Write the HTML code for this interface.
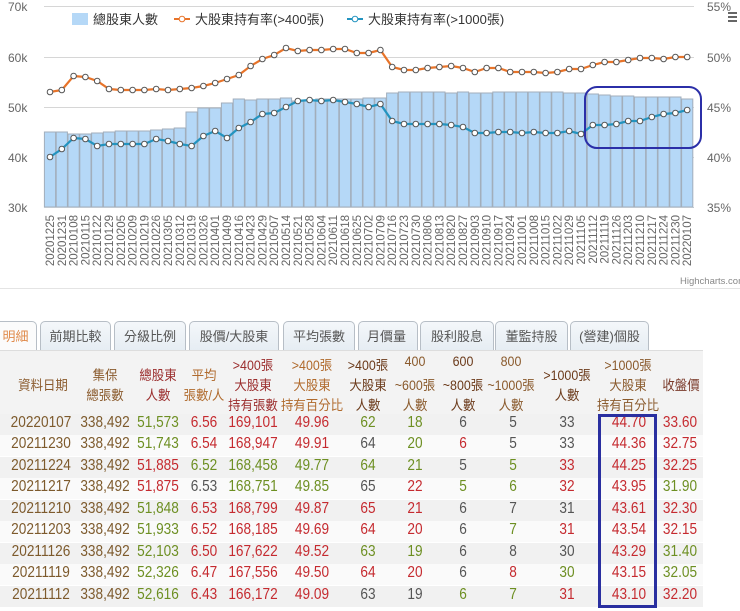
<!DOCTYPE html>
<html><head><meta charset="utf-8">
<style>
body{margin:0;width:740px;height:611px;overflow:hidden;background:#fff;font-family:"Liberation Sans","Noto Sans CJK TC",sans-serif;position:relative}
.tab{position:absolute;top:321px;height:29px;border:1px solid #b7bec6;border-bottom:none;border-radius:5px 5px 0 0;background:linear-gradient(#f4f7fa,#e6edf3);color:#555;font-size:13px;line-height:29px;text-align:center;box-sizing:border-box}
.c{position:absolute;width:90px;margin-left:-45px;text-align:center;white-space:nowrap}
.h{font-size:13.5px;color:#8a5a2c}
.h .c{transform:scaleX(0.92)}
.d{font-size:15.5px}
.d .c{transform:scaleX(0.88)}
.br{color:#7d5a2c}.r{color:#c52a2f}.g{color:#6d8f22}.k{color:#555}
.row{position:absolute;left:0;width:703px;height:21px}
</style></head><body>
<svg width="740" height="300" style="position:absolute;left:0;top:0" font-family="Liberation Sans, Noto Sans CJK TC, sans-serif">
<g stroke="#d6d6d6" stroke-width="1">
<line x1="44" y1="6.5" x2="694" y2="6.5"/><line x1="44" y1="57.5" x2="694" y2="57.5"/><line x1="44" y1="107.5" x2="694" y2="107.5"/><line x1="44" y1="157.5" x2="694" y2="157.5"/>
</g>
<g font-size="12" fill="#666">
<text x="8" y="11">70k</text><text x="8" y="62">60k</text><text x="8" y="112">50k</text><text x="8" y="162">40k</text><text x="8" y="212">30k</text>
<text x="707" y="11">55%</text><text x="707" y="62">50%</text><text x="707" y="112">45%</text><text x="707" y="162">40%</text><text x="707" y="212">35%</text>
</g>
<g id="bars"></g>
<line x1="44" y1="207.5" x2="694" y2="207.5" stroke="#c0c8d0"/>
<g id="lines"></g>
<rect x="585" y="87" width="116" height="61" rx="12" fill="none" stroke="#2b2fa8" stroke-width="2"/>
<rect x="72" y="13" width="16" height="12" fill="#b5d8f7"/>
<text x="93" y="24" font-size="13" fill="#333">總股東人數</text>
<line x1="174" y1="19" x2="190" y2="19" stroke="#e8742a" stroke-width="2"/><circle cx="182" cy="19" r="2.8" fill="#fff" stroke="#e8742a"/>
<text x="195" y="24" font-size="13" fill="#333">大股東持有率(&gt;400張)</text>
<line x1="347" y1="19" x2="363" y2="19" stroke="#2394c0" stroke-width="2"/><circle cx="355" cy="19" r="2.8" fill="#fff" stroke="#2394c0"/>
<text x="368" y="24" font-size="13" fill="#333">大股東持有率(&gt;1000張)</text>
<g fill="#666"><rect x="728" y="12" width="9" height="2"/><rect x="728" y="16" width="9" height="2"/><rect x="728" y="20" width="9" height="2"/></g>
<g font-size="11.5" fill="#666" text-anchor="end" id="xl">
<text transform="translate(50,215) rotate(-90)" dy="4">20201225</text>
<text transform="translate(61.8,215) rotate(-90)" dy="4">20201231</text>
<text transform="translate(73.6,215) rotate(-90)" dy="4">20210108</text>
<text transform="translate(85.4,215) rotate(-90)" dy="4">20210115</text>
<text transform="translate(97.2,215) rotate(-90)" dy="4">20210122</text>
<text transform="translate(109,215) rotate(-90)" dy="4">20210129</text>
<text transform="translate(120.8,215) rotate(-90)" dy="4">20210205</text>
<text transform="translate(132.6,215) rotate(-90)" dy="4">20210209</text>
<text transform="translate(144.4,215) rotate(-90)" dy="4">20210219</text>
<text transform="translate(156.2,215) rotate(-90)" dy="4">20210226</text>
<text transform="translate(168,215) rotate(-90)" dy="4">20210305</text>
<text transform="translate(179.8,215) rotate(-90)" dy="4">20210312</text>
<text transform="translate(191.6,215) rotate(-90)" dy="4">20210319</text>
<text transform="translate(203.4,215) rotate(-90)" dy="4">20210326</text>
<text transform="translate(215.2,215) rotate(-90)" dy="4">20210401</text>
<text transform="translate(227,215) rotate(-90)" dy="4">20210409</text>
<text transform="translate(238.8,215) rotate(-90)" dy="4">20210416</text>
<text transform="translate(250.6,215) rotate(-90)" dy="4">20210423</text>
<text transform="translate(262.4,215) rotate(-90)" dy="4">20210429</text>
<text transform="translate(274.2,215) rotate(-90)" dy="4">20210507</text>
<text transform="translate(286,215) rotate(-90)" dy="4">20210514</text>
<text transform="translate(297.8,215) rotate(-90)" dy="4">20210521</text>
<text transform="translate(309.6,215) rotate(-90)" dy="4">20210528</text>
<text transform="translate(321.4,215) rotate(-90)" dy="4">20210604</text>
<text transform="translate(333.2,215) rotate(-90)" dy="4">20210611</text>
<text transform="translate(345,215) rotate(-90)" dy="4">20210618</text>
<text transform="translate(356.8,215) rotate(-90)" dy="4">20210625</text>
<text transform="translate(368.6,215) rotate(-90)" dy="4">20210702</text>
<text transform="translate(380.4,215) rotate(-90)" dy="4">20210709</text>
<text transform="translate(392.2,215) rotate(-90)" dy="4">20210716</text>
<text transform="translate(404,215) rotate(-90)" dy="4">20210723</text>
<text transform="translate(415.8,215) rotate(-90)" dy="4">20210730</text>
<text transform="translate(427.6,215) rotate(-90)" dy="4">20210806</text>
<text transform="translate(439.4,215) rotate(-90)" dy="4">20210813</text>
<text transform="translate(451.2,215) rotate(-90)" dy="4">20210820</text>
<text transform="translate(463,215) rotate(-90)" dy="4">20210827</text>
<text transform="translate(474.8,215) rotate(-90)" dy="4">20210903</text>
<text transform="translate(486.6,215) rotate(-90)" dy="4">20210910</text>
<text transform="translate(498.4,215) rotate(-90)" dy="4">20210917</text>
<text transform="translate(510.2,215) rotate(-90)" dy="4">20210924</text>
<text transform="translate(522,215) rotate(-90)" dy="4">20211001</text>
<text transform="translate(533.8,215) rotate(-90)" dy="4">20211008</text>
<text transform="translate(545.6,215) rotate(-90)" dy="4">20211015</text>
<text transform="translate(557.4,215) rotate(-90)" dy="4">20211022</text>
<text transform="translate(569.2,215) rotate(-90)" dy="4">20211029</text>
<text transform="translate(581,215) rotate(-90)" dy="4">20211105</text>
<text transform="translate(592.8,215) rotate(-90)" dy="4">20211112</text>
<text transform="translate(604.6,215) rotate(-90)" dy="4">20211119</text>
<text transform="translate(616.4,215) rotate(-90)" dy="4">20211126</text>
<text transform="translate(628.2,215) rotate(-90)" dy="4">20211203</text>
<text transform="translate(640,215) rotate(-90)" dy="4">20211210</text>
<text transform="translate(651.8,215) rotate(-90)" dy="4">20211217</text>
<text transform="translate(663.6,215) rotate(-90)" dy="4">20211224</text>
<text transform="translate(675.4,215) rotate(-90)" dy="4">20211230</text>
<text transform="translate(687.2,215) rotate(-90)" dy="4">20220107</text>
</g>
<text x="680" y="284" font-size="9.5" fill="#888">Highcharts.com</text>
<line x1="0" y1="288.5" x2="740" y2="288.5" stroke="#e4e4e4"/>
</svg>
<script>
(function(){
var ns="http://www.w3.org/2000/svg";
var B=[132,132,134,134,133,132,131,131,131,130,129,128,112,108,108,103,99,100,99,99,98,101,100,99,99,99,99,98,98,93,92,92,92,92,93,92,93,93,92,92,92,92,92,92,93,93,94,95,96,96,97,97,97,97,99];
var O=[92,90,76,77,81,89,90,90,90,89,90,89,88,86,83,79,75,66,59,55,48,51,50,50,49,49,53,53,50,67,70,70,68,67,66,68,72,68,68,72,72,72,73,72,69,69,65,62,62,60,58,58,59,57,57];
var L=[157,149,138,139,146,144,144,144,144,139,141,144,146,136,131,138,128,122,114,113,107,101,100,101,100,102,104,107,104,121,124,124,124,124,125,127,133,133,132,132,133,132,133,133,131,134,125,125,124,121,121,117,114,113,110];
var bars=document.getElementById('bars'),lines=document.getElementById('lines');
function el(n,a,p){var e=document.createElementNS(ns,n);for(var k in a)e.setAttribute(k,a[k]);p.appendChild(e);return e;}
for(var i=0;i<55;i++){var x=50+11.8*i;el('rect',{x:x-5.6,y:B[i],width:11.2,height:207-B[i],fill:'#b5d8f7',stroke:'#a2aebb','stroke-width':1},bars);}
[[O,'#e8742a'],[L,'#2394c0']].forEach(function(s){var d='';for(var i=0;i<55;i++){d+=(i?'L':'M')+(50+11.8*i)+' '+s[0][i];}
el('path',{d:d,fill:'none',stroke:s[1],'stroke-width':2.2},lines);
for(var i=0;i<55;i++)el('circle',{cx:50+11.8*i,cy:s[0][i],r:2.8,fill:'#fff',stroke:'#555','stroke-width':1},lines);});
})();
</script>

<div class="tab" style="left:-6px;width:43px;background:#fbfbfb;color:#e08a4a">明細</div>
<div class="tab" style="left:40px;width:71px">前期比較</div>
<div class="tab" style="left:114px;width:72px">分級比例</div>
<div class="tab" style="left:189px;width:90px">股價/大股東</div>
<div class="tab" style="left:283px;width:72px">平均張數</div>
<div class="tab" style="left:358px;width:60px;text-align:left;padding-left:8px">月價量</div>
<div class="tab" style="left:420px;width:74px">股利股息</div>
<div class="tab" style="left:495px;width:73px">董監持股</div>
<div class="tab" style="left:570px;width:79px">(營建)個股</div>

<div style="position:absolute;left:0;top:350px;width:703px;height:64px;background:#f3f3f3;border-top:1px solid #ddd"></div>
<div class="h">
<div class="c" style="left:43px;top:374px">資料日期</div>
<div class="c" style="left:105px;top:364px">集保</div><div class="c" style="left:105px;top:384px">總張數</div>
<div class="c" style="left:158px;top:364px;color:#9b2d2d">總股東</div><div class="c" style="left:158px;top:384px;color:#9b2d2d">人數</div>
<div class="c" style="left:204px;top:364px;color:#b06a2c">平均</div><div class="c" style="left:204px;top:384px;color:#b06a2c">張數/人</div>
<div class="c" style="left:253px;top:354px;color:#9b2d2d">&gt;400張</div><div class="c" style="left:253px;top:374px;color:#9b2d2d">大股東</div><div class="c" style="left:253px;top:394px;color:#9b2d2d">持有張數</div>
<div class="c" style="left:312px;top:354px;color:#b06a2c">&gt;400張</div><div class="c" style="left:312px;top:374px;color:#b06a2c">大股東</div><div class="c" style="left:312px;top:394px;color:#b06a2c">持有百分比</div>
<div class="c" style="left:368px;top:354px;color:#6b3a1a">&gt;400張</div><div class="c" style="left:368px;top:374px;color:#6b3a1a">大股東</div><div class="c" style="left:368px;top:394px;color:#6b3a1a">人數</div>
<div class="c" style="left:415px;top:354px">400</div><div class="c" style="left:415px;top:374px">~600張</div><div class="c" style="left:415px;top:394px">人數</div>
<div class="c" style="left:463px;top:354px;color:#6b3a1a">600</div><div class="c" style="left:463px;top:374px;color:#6b3a1a">~800張</div><div class="c" style="left:463px;top:394px;color:#6b3a1a">人數</div>
<div class="c" style="left:511px;top:354px">800</div><div class="c" style="left:511px;top:374px">~1000張</div><div class="c" style="left:511px;top:394px">人數</div>
<div class="c" style="left:567px;top:364px;color:#6b3a1a">&gt;1000張</div><div class="c" style="left:567px;top:384px;color:#6b3a1a">人數</div>
<div class="c" style="left:628px;top:354px">&gt;1000張</div><div class="c" style="left:628px;top:374px">大股東</div><div class="c" style="left:628px;top:394px">持有百分比</div>
<div class="c" style="left:681px;top:374px;color:#7a3a2a">收盤價</div>
</div>

<div class="row" style="top:414px;background:#f1f1f1"></div>
<div class="row" style="top:435px;background:#fafafa"></div>
<div class="row" style="top:457px;background:#f1f1f1"></div>
<div class="row" style="top:478px;background:#fafafa"></div>
<div class="row" style="top:500px;background:#f1f1f1"></div>
<div class="row" style="top:521px;background:#fafafa"></div>
<div class="row" style="top:543px;background:#f1f1f1"></div>
<div class="row" style="top:564px;background:#fafafa"></div>
<div class="row" style="top:586px;background:#f1f1f1"></div>

<div class="d">
<div style="position:absolute;top:414px;left:0;width:740px">
<span class="c br" style="left:41px">20220107</span><span class="c br" style="left:105px">338,492</span><span class="c g" style="left:158px">51,573</span><span class="c r" style="left:204px">6.56</span><span class="c r" style="left:253px">169,101</span><span class="c r" style="left:312px">49.96</span><span class="c g" style="left:368px">62</span><span class="c g" style="left:415px">18</span><span class="c k" style="left:463px">6</span><span class="c k" style="left:513px">5</span><span class="c k" style="left:567px">33</span><span class="c r" style="left:629px">44.70</span><span class="c r" style="left:680px">33.60</span></div>
<div style="position:absolute;top:435px;left:0;width:740px">
<span class="c br" style="left:41px">20211230</span><span class="c br" style="left:105px">338,492</span><span class="c g" style="left:158px">51,743</span><span class="c r" style="left:204px">6.54</span><span class="c r" style="left:253px">168,947</span><span class="c r" style="left:312px">49.91</span><span class="c k" style="left:368px">64</span><span class="c g" style="left:415px">20</span><span class="c r" style="left:463px">6</span><span class="c k" style="left:513px">5</span><span class="c k" style="left:567px">33</span><span class="c r" style="left:629px">44.36</span><span class="c r" style="left:680px">32.75</span></div>
<div style="position:absolute;top:457px;left:0;width:740px">
<span class="c br" style="left:41px">20211224</span><span class="c br" style="left:105px">338,492</span><span class="c r" style="left:158px">51,885</span><span class="c g" style="left:204px">6.52</span><span class="c g" style="left:253px">168,458</span><span class="c g" style="left:312px">49.77</span><span class="c g" style="left:368px">64</span><span class="c g" style="left:415px">21</span><span class="c k" style="left:463px">5</span><span class="c g" style="left:513px">5</span><span class="c r" style="left:567px">33</span><span class="c r" style="left:629px">44.25</span><span class="c r" style="left:680px">32.25</span></div>
<div style="position:absolute;top:478px;left:0;width:740px">
<span class="c br" style="left:41px">20211217</span><span class="c br" style="left:105px">338,492</span><span class="c r" style="left:158px">51,875</span><span class="c k" style="left:204px">6.53</span><span class="c g" style="left:253px">168,751</span><span class="c g" style="left:312px">49.85</span><span class="c k" style="left:368px">65</span><span class="c r" style="left:415px">22</span><span class="c g" style="left:463px">5</span><span class="c g" style="left:513px">6</span><span class="c r" style="left:567px">32</span><span class="c r" style="left:629px">43.95</span><span class="c g" style="left:680px">31.90</span></div>
<div style="position:absolute;top:500px;left:0;width:740px">
<span class="c br" style="left:41px">20211210</span><span class="c br" style="left:105px">338,492</span><span class="c g" style="left:158px">51,848</span><span class="c r" style="left:204px">6.53</span><span class="c r" style="left:253px">168,799</span><span class="c r" style="left:312px">49.87</span><span class="c r" style="left:368px">65</span><span class="c r" style="left:415px">21</span><span class="c k" style="left:463px">6</span><span class="c k" style="left:513px">7</span><span class="c k" style="left:567px">31</span><span class="c r" style="left:629px">43.61</span><span class="c r" style="left:680px">32.30</span></div>
<div style="position:absolute;top:521px;left:0;width:740px">
<span class="c br" style="left:41px">20211203</span><span class="c br" style="left:105px">338,492</span><span class="c g" style="left:158px">51,933</span><span class="c r" style="left:204px">6.52</span><span class="c r" style="left:253px">168,185</span><span class="c r" style="left:312px">49.69</span><span class="c r" style="left:368px">64</span><span class="c r" style="left:415px">20</span><span class="c k" style="left:463px">6</span><span class="c g" style="left:513px">7</span><span class="c r" style="left:567px">31</span><span class="c r" style="left:629px">43.54</span><span class="c r" style="left:680px">32.15</span></div>
<div style="position:absolute;top:543px;left:0;width:740px">
<span class="c br" style="left:41px">20211126</span><span class="c br" style="left:105px">338,492</span><span class="c g" style="left:158px">52,103</span><span class="c r" style="left:204px">6.50</span><span class="c r" style="left:253px">167,622</span><span class="c r" style="left:312px">49.52</span><span class="c g" style="left:368px">63</span><span class="c g" style="left:415px">19</span><span class="c k" style="left:463px">6</span><span class="c k" style="left:513px">8</span><span class="c k" style="left:567px">30</span><span class="c r" style="left:629px">43.29</span><span class="c g" style="left:680px">31.40</span></div>
<div style="position:absolute;top:564px;left:0;width:740px">
<span class="c br" style="left:41px">20211119</span><span class="c br" style="left:105px">338,492</span><span class="c g" style="left:158px">52,326</span><span class="c r" style="left:204px">6.47</span><span class="c r" style="left:253px">167,556</span><span class="c r" style="left:312px">49.50</span><span class="c r" style="left:368px">64</span><span class="c r" style="left:415px">20</span><span class="c k" style="left:463px">6</span><span class="c r" style="left:513px">8</span><span class="c g" style="left:567px">30</span><span class="c r" style="left:629px">43.15</span><span class="c g" style="left:680px">32.05</span></div>
<div style="position:absolute;top:586px;left:0;width:740px">
<span class="c br" style="left:41px">20211112</span><span class="c br" style="left:105px">338,492</span><span class="c g" style="left:158px">52,616</span><span class="c r" style="left:204px">6.43</span><span class="c r" style="left:253px">166,172</span><span class="c r" style="left:312px">49.09</span><span class="c k" style="left:368px">63</span><span class="c k" style="left:415px">19</span><span class="c g" style="left:463px">6</span><span class="c g" style="left:513px">7</span><span class="c r" style="left:567px">31</span><span class="c r" style="left:629px">43.10</span><span class="c r" style="left:680px">32.20</span></div>
</div>
<div style="position:absolute;left:598px;top:414px;width:53px;height:188px;border:3px solid #2a2fa0"></div>
</body></html>
